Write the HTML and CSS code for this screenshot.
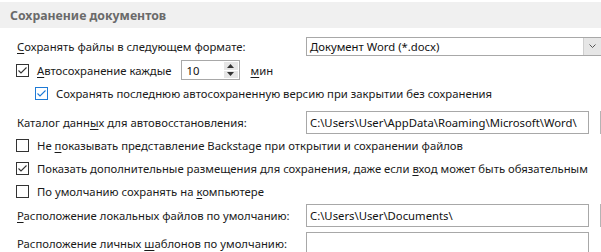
FILE: index.html
```html
<!DOCTYPE html>
<html lang="ru">
<head>
<meta charset="utf-8">
<link rel="stylesheet" href="styles.css">
</head>
<body>
<div class="page">
  <div class="section-head">Сохранение документов</div>

  <div class="row r1">
    <span class="label lbl-col"><u>С</u>охранять файлы в следующем формате:</span>
    <div class="select">
      <span class="select-text">Документ Word (*.docx)</span>
      <span class="select-btn"><svg width="9" height="6" viewBox="0 0 9 6"><path d="M1.5 1.5 L4.5 4.5 L7.5 1.5" fill="none" stroke="#555" stroke-width="1"/></svg></span>
    </div>
  </div>

  <div class="row r2">
    <span class="cb checked"><svg width="13" height="13" viewBox="0 0 13 13"><rect x="0.5" y="0.5" width="12" height="12" fill="#fff" stroke="#333"/><path d="M2.5 6.5 L5 9 L10.5 3.5" fill="none" stroke="#333" stroke-width="1.1"/></svg></span>
    <span class="label"><u>А</u>втосохранение каждые</span>
    <div class="spin">
      <span class="spin-text">10</span>
      <span class="spin-btns">
        <span class="spin-b"><svg width="7" height="4" viewBox="0 0 7 4"><path d="M0 4 L3.5 0 L7 4 Z" fill="#333"/></svg></span>
        <span class="spin-b"><svg width="7" height="4" viewBox="0 0 7 4"><path d="M0 0 L3.5 4 L7 0 Z" fill="#333"/></svg></span>
      </span>
    </div>
    <span class="label unit"><u>м</u>ин</span>
  </div>

  <div class="row r3">
    <span class="cb blue"><svg width="13" height="13" viewBox="0 0 13 13"><rect x="0.5" y="0.5" width="12" height="12" fill="#fff" stroke="#1e7ad6"/><path d="M2.5 6.5 L5 9 L10.5 3.5" fill="none" stroke="#1e7ad6" stroke-width="1.1"/></svg></span>
    <span class="label">Сохранять последнюю автосохраненную версию при закрытии без сохранения</span>
  </div>

  <div class="row r4">
    <span class="label lbl-col">Каталог данн<u>ы</u>х для автовосстановления:</span>
    <div class="field">C:\Users\User\AppData\Roaming\Microsoft\Word\</div>
    <div class="browse"></div>
  </div>

  <div class="row r5">
    <span class="cb"><svg width="13" height="13" viewBox="0 0 13 13"><rect x="0.5" y="0.5" width="12" height="12" fill="#fff" stroke="#333"/></svg></span>
    <span class="label">Не <u>п</u>оказывать представление Backstage при открытии и сохранении файлов</span>
  </div>

  <div class="row r6">
    <span class="cb checked"><svg width="13" height="13" viewBox="0 0 13 13"><rect x="0.5" y="0.5" width="12" height="12" fill="#fff" stroke="#333"/><path d="M2.5 6.5 L5 9 L10.5 3.5" fill="none" stroke="#333" stroke-width="1.1"/></svg></span>
    <span class="label">Показать дополнительные размещения для сохранения, даже если <u>в</u>ход может быть обязательным</span>
  </div>

  <div class="row r7">
    <span class="cb"><svg width="13" height="13" viewBox="0 0 13 13"><rect x="0.5" y="0.5" width="12" height="12" fill="#fff" stroke="#333"/></svg></span>
    <span class="label">По умолчанию сохранять на <u>к</u>омпьютере</span>
  </div>

  <div class="row r8">
    <span class="label lbl-col"><u>Р</u>асположение локальных файлов по умолчанию:</span>
    <div class="field">C:\Users\User\Documents\</div>
    <div class="browse"></div>
  </div>

  <div class="row r9">
    <span class="label lbl-col">Расположение личных <u>ш</u>аблонов по умолчанию:</span>
    <div class="field tall"></div>
  </div>
</div>
</body>
</html>
```

FILE: styles.css
```css
html, body {
  margin: 0;
  padding: 0;
  background: #fff;
  overflow: hidden;
}

.page {
  width: 601px;
  height: 252px;
  overflow: hidden;
  font-family: "Noto Sans", "Open Sans", sans-serif;
  font-size: 11.3px;
  color: #1a1a1a;
}

.section-head {
  height: 26px;
  margin-top: 2px;
  background: #f0f0f0;
  padding-left: 10px;
  font-weight: bold;
  font-size: 12.3px;
  color: #6a6a6a;
  display: flex;
  align-items: center;
  margin-bottom: 6px;
}

.row {
  display: flex;
  align-items: center;
  height: 23px;
  white-space: nowrap;
}

.r1, .r2, .r4, .r8, .r9 { height: 24px; }
.r4 { margin-top: 5px; }
.r9 { margin-top: 4px; }

.r1, .r4, .r8, .r9 { padding-left: 17px; }
.r2, .r5, .r6, .r7 { padding-left: 16px; }
.r3 { padding-left: 35px; }

.label u { text-decoration: underline; text-underline-offset: 2px; }

.lbl-col {
  width: 289px;
  flex: none;
}

.cb {
  width: 13px;
  height: 13px;
  display: flex;
  margin-right: 8px;
  flex: none;
}

.select {
  width: 296px;
  height: 19px;
  border: 1px solid #a8a8a8;
  display: flex;
  align-items: center;
  flex: none;
  box-sizing: border-box;
}

.select-text {
  flex: 1;
  padding-left: 3px;
  color: #111;
}

.select-btn {
  width: 17px;
  height: 17px;
  background: #e6e6e6;
  border-left: 1px solid #cfcfcf;
  display: flex;
  align-items: center;
  justify-content: center;
}

.spin {
  margin-left: 9px;
  width: 59px;
  height: 20px;
  border: 1px solid #a8a8a8;
  box-sizing: border-box;
  display: flex;
  align-items: center;
}

.spin-text {
  flex: 1;
  padding-left: 5px;
  color: #111;
}

.spin-btns {
  width: 14px;
  height: 16px;
  margin-right: 1px;
  display: flex;
  flex-direction: column;
  gap: 1px;
}

.spin-b {
  flex: 1;
  background: #e6e6e6;
  display: flex;
  align-items: center;
  justify-content: center;
}

.unit { margin-left: 11px; }

.field {
  width: 283px;
  height: 23px;
  border: 1px solid #a8a8a8;
  box-sizing: border-box;
  padding-left: 3px;
  display: flex;
  align-items: center;
  color: #111;
  flex: none;
}

.field.tall { height: 26px; align-self: flex-start; margin-top: 1px; }

.browse {
  margin-left: 11px;
  width: 40px;
  height: 23px;
  border: 1px solid #b4b4b4;
  background: #fdfdfd;
  box-sizing: border-box;
  flex: none;
}
```
